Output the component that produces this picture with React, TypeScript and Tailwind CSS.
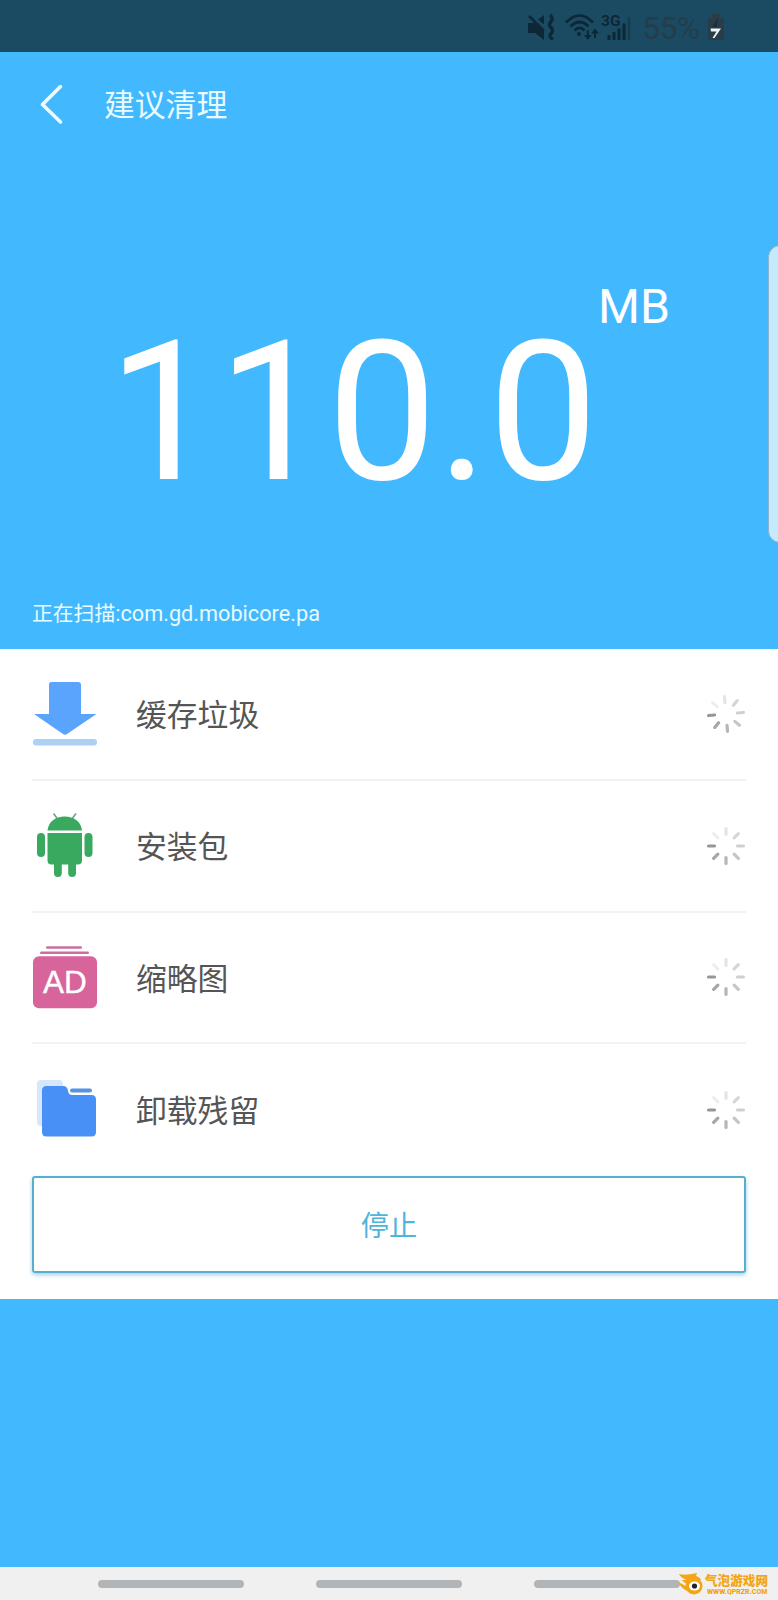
import React from 'react';

interface ScanItem {
  id: string;
  label: string;
  icon: React.ReactNode;
  spinnerTilt: number;
}

const DownloadIcon = () => (
  <svg width="66" height="66" viewBox="0 0 66 66">
    <path d="M19 1h27q3 0 3 3v29h15.500L35 53q-2 1.500-4 0L2 33h15V4q0-3 2-3z" fill="#5ba4fd" />
    <rect x="1" y="58" width="64" height="6.500" rx="3.200" fill="#aed0f5" />
  </svg>
);

const AndroidIcon = () => (
  <svg width="66" height="66" viewBox="0 0 66 66">
    <path d="M21.500 0.500l4.500 6M44 0.500l-4.500 6" stroke="#6aa585" strokeWidth="1.600" />
    <path d="M15.500 17.500C16.500 8.500 23.500 3.500 32.700 3.500S49 8.500 50 17.500z" fill="#39a95f" />
    <path d="M15.500 20h34.500v27.500q0 4-4 4h-2v8.500a3.900 3.900 0 0 1-7.800 0v-8.500h-6.400v8.500a3.900 3.900 0 0 1-7.800 0v-8.500h-2.500q-4 0-4-4z" fill="#39a95f" />
    <rect x="5" y="20" width="8" height="24" rx="4" fill="#39a95f" />
    <rect x="52.500" y="20" width="8" height="24" rx="4" fill="#39a95f" />
  </svg>
);

const AdIcon = () => (
  <svg width="66" height="66" viewBox="0 0 66 66">
    <rect x="14" y="2.200" width="36" height="2.600" rx="1.300" fill="#cb6fa0" />
    <rect x="8" y="7.400" width="49" height="2.600" rx="1.300" fill="#cb6fa0" />
    <rect x="1" y="12.200" width="64" height="52" rx="6" fill="#d8649c" />
    <text
      x="33"
      y="49"
      textAnchor="middle"
      fill="#fff"
      stroke="#fff"
      strokeWidth="0.400"
      fontSize="31.500"
      fontFamily="'Liberation Sans', sans-serif"
    >
      AD
    </text>
  </svg>
);

const FolderIcon = () => (
  <svg width="66" height="66" viewBox="0 0 66 66">
    <path d="M9 3h18q4 0 4 4v42H9q-4 0-4-4V7q0-4 4-4z" fill="#d6e7fc" />
    <path
      d="M14.500 9h16.500q4.500 0 5 5 .5 4 4.500 4h19q4.500 0 4.500 4.500V55q0 4.500-4.500 4.500H14.500Q10 59.500 10 55V13.500Q10 9 14.500 9z"
      fill="#4890f6"
    />
    <rect x="38" y="11.500" width="22" height="4" rx="2" fill="#5494e2" />
  </svg>
);

const ITEMS: ScanItem[] = [
  { id: 'cache', label: '缓存垃圾', icon: <DownloadIcon />, spinnerTilt: -5 },
  { id: 'apk', label: '安装包', icon: <AndroidIcon />, spinnerTilt: 0 },
  { id: 'thumbs', label: '缩略图', icon: <AdIcon />, spinnerTilt: 0 },
  { id: 'residue', label: '卸载残留', icon: <FolderIcon />, spinnerTilt: 0 },
];

// clockwise from twelve o'clock
const SPOKES = ['#e4e4e4', '#d6d6d6', '#d0d0d0', '#c6c6c6', '#b6b6b6', '#a6a6a6', '#969696', '#eeeeee'];

const Spinner: React.FC<{ tilt: number }> = ({ tilt }) => (
  <svg width="40" height="40" viewBox="-20 -20 40 40">
    {SPOKES.map((color, i) => (
      <line
        key={i}
        y1="-11.500"
        y2="-17.500"
        stroke={color}
        strokeWidth="3.200"
        strokeLinecap="round"
        transform={`rotate(${i * 45 + tilt})`}
      />
    ))}
  </svg>
);

const StatusBar = () => (
  <div className="flex h-13 shrink-0 items-center bg-[#1b4b63] pt-0.5 pl-[527px] text-[#0d2737]">
    <svg width="28" height="28" viewBox="0 0 28 28" className="shrink-0">
      <path d="M1 10h6l4 0 6 7v10l-9-7H1z" fill="currentColor" />
      <path d="M17 2v9.500l-6-5z" fill="currentColor" />
      <path d="M2 3l15 15" stroke="currentColor" strokeWidth="2.600" />
      <path d="M23 2q4 3.500 1 6.500t0 6 0 6 2 6" stroke="currentColor" strokeWidth="3.200" fill="none" />
    </svg>
    <svg width="34" height="28" viewBox="0 0 34 28" className="ml-2.5 shrink-0">
      <g stroke="currentColor" strokeWidth="2.700" fill="none">
        <path d="M1 9.500q13.500-14 27 0" />
        <path d="M5.500 13.500q9-9 18 0" />
        <path d="M9.500 17.500q5-5 10 0" />
      </g>
      <circle cx="14" cy="21" r="2" fill="currentColor" />
      <path d="M22.800 17v6M30 25v-6" stroke="currentColor" strokeWidth="2" />
      <path d="M19 22h7.600l-3.800 5zM26.200 20.500h7.600L30 15.500z" fill="currentColor" />
    </svg>
    <svg width="30" height="28" viewBox="0 0 30 28" className="ml-0.5 shrink-0">
      <text x="0" y="13" fontSize="15.500" fontWeight="700" fontFamily="Roboto, sans-serif" fill="currentColor">
        3G
      </text>
      <path d="M8 27v-5M13 27v-8M18 27V15.500M23 27V10.500" stroke="currentColor" strokeWidth="3" />
      <path d="M28 27V4.500" stroke="#143b51" strokeWidth="2.400" />
    </svg>
    <span className="mt-0.5 ml-[11px] text-[32px] leading-none tracking-[-0.600px] text-[#243d4b]">55%</span>
    <svg width="18" height="28" viewBox="0 0 18 28" className="ml-[7px] shrink-0">
      <path d="M5 1h8v4h4v22H1V5h4z" fill="#2a3c48" />
      <path d="M3.500 15.500h10.500l-6.500 9.500h-2l4-6.500H4z" fill="#eef3f5" />
      <path d="M11 5l-6 9h5z" fill="#16303f" />
    </svg>
  </div>
);

const Watermark = () => (
  <div className="absolute top-0.5 left-[677px] flex h-7 w-[93px] items-center text-[#f3a514]">
    <svg width="28" height="26" viewBox="0 0 28 26" className="shrink-0">
      <path d="M2 3q6 2 18-1l-1 3q4 1 5 4l-5 1L10 13Q6 11 5 9l5 0Q4 7 2 3z" fill="currentColor" />
      <circle cx="17" cy="15" r="8.500" fill="currentColor" />
      <ellipse cx="17.500" cy="15" rx="5.500" ry="4.500" fill="#fff" />
      <circle cx="17.500" cy="15" r="2.600" fill="#222" />
      <path d="M1 11q5 2 9 5l0 4Q4 17 1 11z" fill="currentColor" />
    </svg>
    <div className="flex flex-col whitespace-nowrap">
      <span className="text-[12.600px] leading-[15px] font-black">气泡游戏网</span>
      <span className="pl-0.5 text-[7px] leading-[8px] font-black">WWW.QPRZR.COM</span>
    </div>
  </div>
);

const App: React.FC = () => {
  return (
    <div className="relative flex h-[1600px] w-[778px] flex-col overflow-hidden bg-[#42b9fe] font-['Roboto','Noto_Sans_CJK_SC',sans-serif]">
      <StatusBar />

      <header className="flex h-[105px] shrink-0 items-center pl-10 text-[#e9fbff]">
        <svg width="24" height="40" viewBox="0 0 24 40" fill="none" className="shrink-0">
          <path d="M20.500 1.500L2.500 19.500l18 17.500" stroke="currentColor" strokeWidth="3.600" strokeLinecap="round" strokeLinejoin="round" />
        </svg>
        <h1 className="mt-1 ml-10 text-[30.800px] leading-none">建议清理</h1>
      </header>

      <section className="flex h-[492px] shrink-0 flex-col text-white">
        <div className="flex pt-[122px] pl-[108px]">
          <span className="pt-1 text-[195.500px] leading-[260px] tracking-[-0.200px]">110.0</span>
          <span className="text-[48px] leading-[56px]">MB</span>
        </div>
        <p className="mt-auto mb-[22px] pl-8 text-[20.800px] leading-[26px] text-[#e9fbff]">
          正在扫描<span className="text-[21.700px]">:com.gd.mobicore.pa</span>
        </p>
      </section>

      <main className="flex h-[650px] shrink-0 flex-col bg-white px-8">
        <ul className="divide-y-2 divide-[#f2f2f2]">
          {ITEMS.map((item) => (
            <li key={item.id} className="flex h-[131.800px] items-center">
              <span className="flex w-[104px]">{item.icon}</span>
              <span className="mt-[5px] text-[30.800px] leading-none text-[#555]">{item.label}</span>
              <span className="ml-auto">
                <Spinner tilt={item.spinnerTilt} />
              </span>
            </li>
          ))}
        </ul>
        <button className="h-[97px] shrink-0 rounded-[3px] border-2 border-[#56afd0] pt-[5px] text-[28.200px] text-[#4db5dc] shadow-[0_2px_4px_#a9cfe0]">
          停止
        </button>
      </main>

      <nav className="relative mt-auto flex h-[33px] shrink-0 gap-[72px] border-t border-[#e3f4fc] bg-[#f0f0f0] pt-3 pl-[98px]">
        <span className="h-2 w-[146px] rounded-full bg-[#b2b5b7]" />
        <span className="h-2 w-[146px] rounded-full bg-[#b2b5b7]" />
        <span className="h-2 w-[146px] rounded-full bg-[#b2b5b7]" />
        <Watermark />
      </nav>

      <div className="absolute top-[245px] -right-2 h-[298px] w-[18px] rounded-l-xl border border-[#8fb4c9] bg-[#c5e9fd]" />
    </div>
  );
};

export default App;
